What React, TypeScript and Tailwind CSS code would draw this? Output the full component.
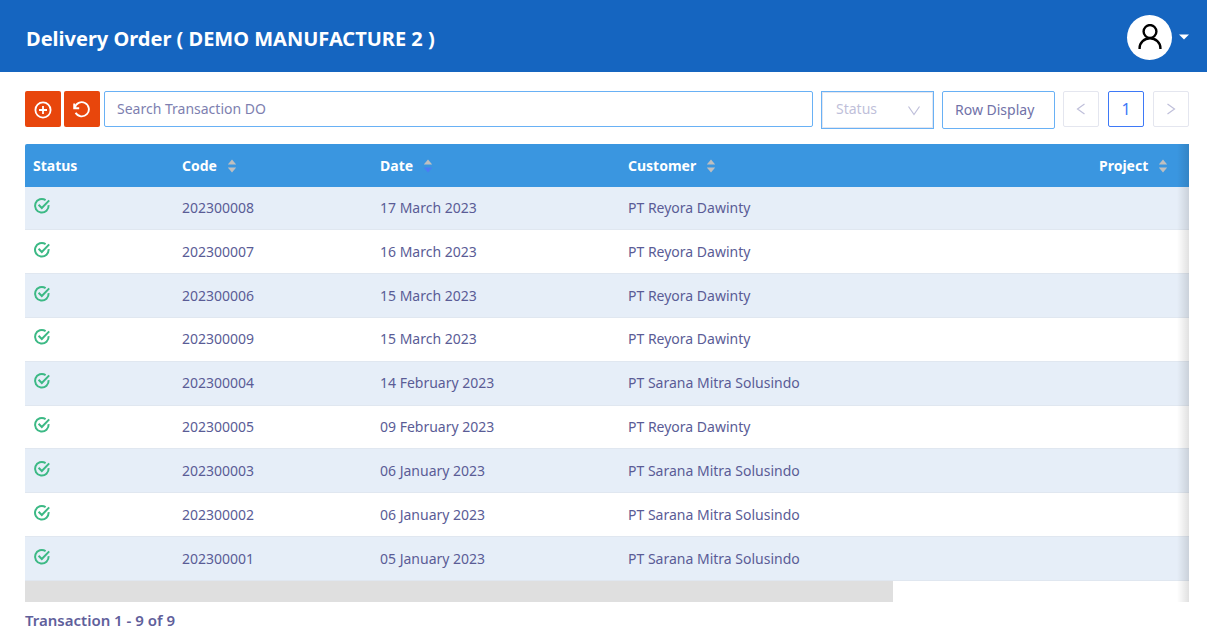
type Order = {
  code: string;
  date: string;
  customer: string;
};

const orders: Order[] = [
  { code: "202300008", date: "17 March 2023", customer: "PT Reyora Dawinty" },
  { code: "202300007", date: "16 March 2023", customer: "PT Reyora Dawinty" },
  { code: "202300006", date: "15 March 2023", customer: "PT Reyora Dawinty" },
  { code: "202300009", date: "15 March 2023", customer: "PT Reyora Dawinty" },
  { code: "202300004", date: "14 February 2023", customer: "PT Sarana Mitra Solusindo" },
  { code: "202300005", date: "09 February 2023", customer: "PT Reyora Dawinty" },
  { code: "202300003", date: "06 January 2023", customer: "PT Sarana Mitra Solusindo" },
  { code: "202300002", date: "06 January 2023", customer: "PT Sarana Mitra Solusindo" },
  { code: "202300001", date: "05 January 2023", customer: "PT Sarana Mitra Solusindo" },
];

const CheckIcon = () => (
  <svg
    className="mb-1"
    width="18"
    height="18"
    viewBox="0 0 18 18"
    fill="none"
    stroke="#3cb985"
    strokeWidth="2"
    role="img"
    aria-label="Done"
  >
    <path d="M12.6 3.1A6.8 6.8 0 1 0 15.6 8.2" />
    <path d="m5.6 7.8 3.2 3.2 7.4-7.6" />
  </svg>
);

const Sorter = ({ down = "#bfbfbf" }: { down?: string }) => (
  <svg width="10" height="14" viewBox="0 0 10 14" aria-hidden="true">
    <path d="M5 0.5 9.2 5.5H0.8Z" fill="#bfbfbf" />
    <path d="M5 13.5 9.2 8.5H0.8Z" fill={down} />
  </svg>
);

const HeadCell = ({ label, down }: { label: string; down?: string }) => (
  <th className="px-2 text-left font-bold">
    <button className="flex items-center gap-2.5 font-bold">
      {label}
      <Sorter down={down} />
    </button>
  </th>
);

const Header = () => (
  <header className="flex h-18 items-center justify-between bg-[#1565c0] pr-[17px] pl-[26px] text-white">
    <h1 className="pt-1.5 text-xl font-bold">Delivery Order ( DEMO MANUFACTURE 2 )</h1>
    <button className="flex items-center gap-1.5 pt-0.5" aria-label="Account menu">
      <span className="flex size-[45px] items-center justify-center rounded-full bg-white">
        <svg width="24" height="26" viewBox="0 0 24 26" fill="none" stroke="#000" strokeWidth="2.4">
          <circle cx="12" cy="7.5" r="6.4" />
          <path d="M1.6 25v-1a10.4 9.8 0 0 1 20.8 0v1" />
        </svg>
      </span>
      <svg width="12" height="6" viewBox="0 0 12 6">
        <path d="M1 0.5h10L6 5.5Z" fill="#fff" />
      </svg>
    </button>
  </header>
);

const Toolbar = () => (
  <div className="flex items-start">
    {/* Actions */}
    <button
      className="flex size-9 items-center justify-center rounded-xs bg-[#e8460c] pt-0.5 text-white"
      aria-label="Add"
    >
      <svg width="18" height="18" viewBox="0 0 18 18" fill="none" stroke="#fff" strokeWidth="1.8">
        <circle cx="9" cy="9" r="7.6" />
        <path d="M9 5v8M5 9h8" />
      </svg>
    </button>
    <button
      className="ml-[3px] flex size-9 items-center justify-center rounded-xs bg-[#e8460c] pt-0.5 text-white"
      aria-label="Reset"
    >
      <svg width="18" height="18" viewBox="0 0 18 18" fill="none" stroke="#fff" strokeWidth="1.9">
        <path d="M1.2 2.4v4.8h5" />
        <path d="M1.8 6.9A7.1 7.1 0 1 1 2.6 11.8" />
      </svg>
    </button>

    {/* Filters */}
    <input
      type="text"
      aria-label="Search Transaction DO"
      placeholder="Search Transaction DO"
      className="ml-1 h-9 min-w-0 flex-1 rounded-xs border border-[#69b1f5] px-3 pb-0.5 placeholder:text-[#7e7fb0]"
    />
    <div className="relative ml-2 w-[113px]">
      <select
        aria-label="Status"
        className="h-[38px] w-full appearance-none border border-[#69b1f5] bg-white pb-0.5 pl-3.5 text-[#bfbfda] inset-ring inset-ring-[#e4e6ef]"
      >
        <option>Status</option>
      </select>
      <svg
        className="pointer-events-none absolute top-3.5 right-3.5"
        width="12"
        height="12"
        viewBox="0 0 12 12"
        fill="none"
        stroke="#bfbfda"
        strokeWidth="1.2"
      >
        <path d="M0.5 1.5 6 9.5 11.5 1.5" />
      </svg>
    </div>
    <button className="ml-2 h-[38px] w-[113px] rounded-xs border border-[#69b1f5] pl-3 text-left text-[#7172a8]">
      Row Display
    </button>

    {/* Pagination */}
    <nav className="ml-2 flex gap-[9px]" aria-label="Pages">
      <button
        className="flex size-9 items-center justify-center rounded-xs border border-[#e4e6ef] text-[#bfbfda]"
        aria-label="Previous page"
      >
        <svg width="10" height="12" viewBox="0 0 10 12" fill="none" stroke="currentColor" strokeWidth="1.2">
          <path d="M8.5 1 1.5 6l7 5" />
        </svg>
      </button>
      <button className="size-9 rounded-xs border border-[#3e79f7] text-base text-[#3e79f7]">1</button>
      <button
        className="flex size-9 items-center justify-center rounded-xs border border-[#e4e6ef] text-[#bfbfda]"
        aria-label="Next page"
      >
        <svg width="10" height="12" viewBox="0 0 10 12" fill="none" stroke="currentColor" strokeWidth="1.2">
          <path d="m1.5 1 7 5-7 5" />
        </svg>
      </button>
    </nav>
  </div>
);

const OrderTable = () => (
  <div className="relative mt-[15px] overflow-hidden rounded-tl-xs">
    <table className="h-[437px] w-full table-fixed">
      <colgroup>
        <col className="w-[149px]" />
        <col className="w-[198px]" />
        <col className="w-[248px]" />
        <col />
        <col className="w-[98px]" />
      </colgroup>
      <thead>
        <tr className="h-[43px] bg-[#3a96e0] text-white">
          <th className="px-2 text-left font-bold">Status</th>
          <HeadCell label="Code" />
          <HeadCell label="Date" down="#4a7cf5" />
          <HeadCell label="Customer" />
          <HeadCell label="Project" />
        </tr>
      </thead>
      <tbody>
        {orders.map((order) => (
          <tr key={order.code} className="border-b border-[#e0e7f0] odd:bg-[#e6eef8]">
            <td className="px-2">
              <CheckIcon />
            </td>
            <td className="px-2">{order.code}</td>
            <td className="px-2">{order.date}</td>
            <td className="px-2">{order.customer}</td>
            <td className="px-2"></td>
          </tr>
        ))}
      </tbody>
    </table>

    {/* Scroll bar */}
    <div className="h-[21px]">
      <div className="h-full w-[868px] bg-[#dfdfdf]"></div>
    </div>
    <div className="pointer-events-none absolute inset-y-0 right-0 w-3 bg-linear-to-r from-transparent to-black/12"></div>
  </div>
);

const App = () => {
  return (
    <div className="bg-white font-['Noto_Sans',sans-serif] text-sm text-[#5a5c96]">
      <Header />
      <main className="pt-[19px] pr-[18px] pl-[25px]">
        <Toolbar />
        <OrderTable />
        <p className="mt-2 text-[15px] leading-5 font-semibold text-[#5f609b]">
          Transaction 1 - 9 of 9
        </p>
      </main>
    </div>
  );
};

export default App;
